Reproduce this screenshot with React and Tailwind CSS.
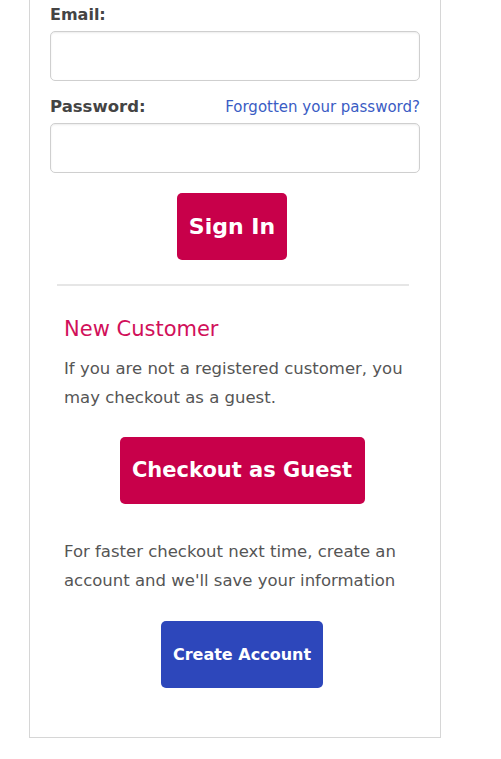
export default function App() {
    return (
        <div className="bg-white min-h-[759px] w-[501px]" style={{ fontFamily: '"DejaVu Sans", Verdana, sans-serif' }}>
            <div className="ml-[29px] w-[412px] border-x border-b border-[#d6d6d6] px-[20px] pb-[49px]">
                {/* Sign in form */}
                <label className="block pt-[5px] text-[16px] font-bold leading-[20px] text-[#444]">Email:</label>
                <input type="text" className="mt-[6px] block h-[50px] w-full rounded-[5px] border border-[#cfcfcf] shadow-[inset_0_1px_2px_rgba(0,0,0,0.08)]" />

                <div className="mt-[16px] flex items-end justify-between">
                    <label className="text-[16.5px] font-bold leading-[20px] text-[#444]">Password:</label>
                    <a href="#" className="text-[15px] leading-[20px] text-[#3a5cc4]">Forgotten your password?</a>
                </div>
                <input type="password" className="mt-[6px] block h-[50px] w-full rounded-[5px] border border-[#cfcfcf] shadow-[inset_0_1px_2px_rgba(0,0,0,0.08)]" />

                <div className="mt-[20px] flex justify-center pr-[6px]">
                    <button className="h-[67px] w-[110px] rounded-[5px] bg-[#c8004a] text-[22px] font-bold text-white">Sign In</button>
                </div>

                <hr className="ml-[7px] mr-[11px] mt-[24px] border-t-2 border-[#e6e6e6]" />

                {/* New customer */}
                <div className="pl-[14px]">
                    <h2 className="mt-[30px] text-[21px] leading-[26px] text-[#d1105a]">New Customer</h2>
                    <p className="mt-[12px] text-[16.5px] leading-[29px] text-[#555]">
                        If you are not a registered customer, you may checkout as a guest.
                    </p>
                    <div className="mt-[25px] flex justify-center">
                        <button className="h-[67px] w-[245px] rounded-[5px] bg-[#c8004a] text-[21px] font-bold text-white">Checkout as Guest</button>
                    </div>
                    <p className="mt-[33px] text-[16.5px] leading-[29px] text-[#555]">
                        For faster checkout next time, create an account and we'll save your information
                    </p>
                    <div className="mt-[26px] flex justify-center">
                        <button className="h-[67px] w-[162px] rounded-[5px] bg-[#2d47bb] text-[16px] font-bold text-white">Create Account</button>
                    </div>
                </div>
            </div>
        </div>
    );
}
